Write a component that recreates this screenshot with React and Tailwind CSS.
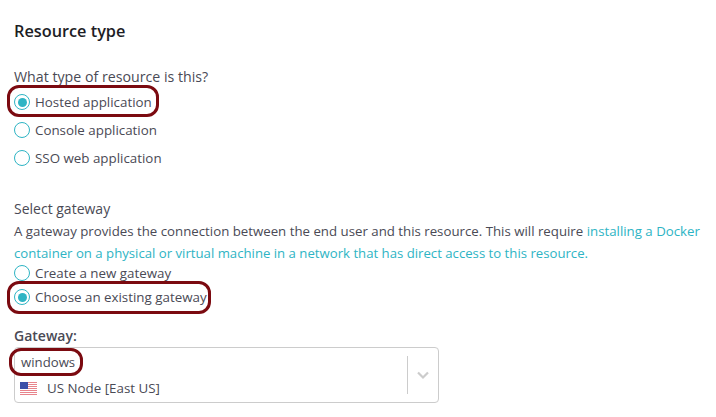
const font = { fontFamily: '"Open Sans", "Noto Sans", sans-serif' }

function Radio({ label, checked, className }) {
  return (
    <div className={`flex items-center ${className}`}>
      <span className="w-4 h-4 rounded-full border border-[#2eb4c4] flex items-center justify-center shrink-0">
        {checked && <span className="w-[9px] h-[9px] rounded-full bg-[#2eb4c4]" />}
      </span>
      <span className="ml-[5px] text-[13.35px] leading-5 text-[#4a4a55]">{label}</span>
    </div>
  )
}

function Oval({ className }) {
  return <div className={`absolute border-[3px] border-[#7b0a10] rounded-[12px] ${className}`} />
}

function UsFlag() {
  return (
    <svg width="17" height="13" viewBox="0 0 17 13" className="shrink-0">
      <rect width="17" height="13" fill="#fff" />
      {[0, 2, 4, 6, 8, 10, 12].map((y) => (
        <rect key={y} y={y} width="17" height="1" fill="#e8848c" />
      ))}
      <rect width="8" height="7" fill="#3c4fa8" />
    </svg>
  )
}

export default function App() {
  return (
    <div className="w-[716px] h-[417px] bg-white overflow-hidden pl-[14px]" style={font}>
      <h2 className="pt-[21px] text-[16.3px] leading-5 font-semibold text-[#1d1d25]">Resource type</h2>
      <p className="mt-[26px] text-[14.2px] leading-5 text-[#4a4a55]">What type of resource is this?</p>

      <div className="relative mt-[5px]">
        <Oval className="-left-[7px] -top-[7px] w-[152px] h-[32px]" />
        <Radio label="Hosted application" checked />
      </div>
      <Radio label="Console application" className="mt-2" />
      <Radio label="SSO web application" className="mt-2" />

      <p className="mt-[31px] text-[14px] leading-5 text-[#4a4a55]">Select gateway</p>
      <p className="mt-[1px] w-[702px] text-[13.25px] leading-[22px] text-[#4a4a55]">
        A gateway provides the connection between the end user and this resource. This will require{' '}
        <span className="text-[#2eb4c4]">installing a Docker </span>
        <span className="text-[13.18px] text-[#2eb4c4]">container on a physical or virtual machine in a network that has direct access to this resource.</span>
      </p>

      <Radio label="Create a new gateway" className="-mt-[1px]" />
      <div className="relative mt-1">
        <Oval className="-left-[7px] -top-[6px] w-[204px] h-[33px]" />
        <Radio label="Choose an existing gateway" checked />
      </div>

      <p className="mt-[19px] text-[14px] leading-5 font-semibold text-[#4a4a55]">Gateway:</p>
      <div className="mt-[1px] w-[425px] h-[56px] border border-[#cccccc] rounded-[4px] flex items-center">
        <div className="flex-1 pl-[5px]">
          <div className="relative text-[13.2px] leading-5 text-[#4a4a55] pl-[1px]">
            <Oval className="-left-[11px] -top-[4px] w-[74px] h-[28px]" />
            windows
          </div>
          <div className="flex items-center mt-[6px]">
            <UsFlag />
            <span className="ml-[10px] text-[13.35px] leading-5 text-[#4a4a55]">US Node [East US]</span>
          </div>
        </div>
        <div className="w-[1px] h-[38px] bg-[#cccccc]" />
        <div className="w-[30px] flex justify-center">
          <svg width="14" height="14" viewBox="0 0 14 14" fill="none" stroke="#cccccc" strokeWidth="2.2">
            <path d="M2 4.5 L7 9.5 L12 4.5" />
          </svg>
        </div>
      </div>
    </div>
  )
}
